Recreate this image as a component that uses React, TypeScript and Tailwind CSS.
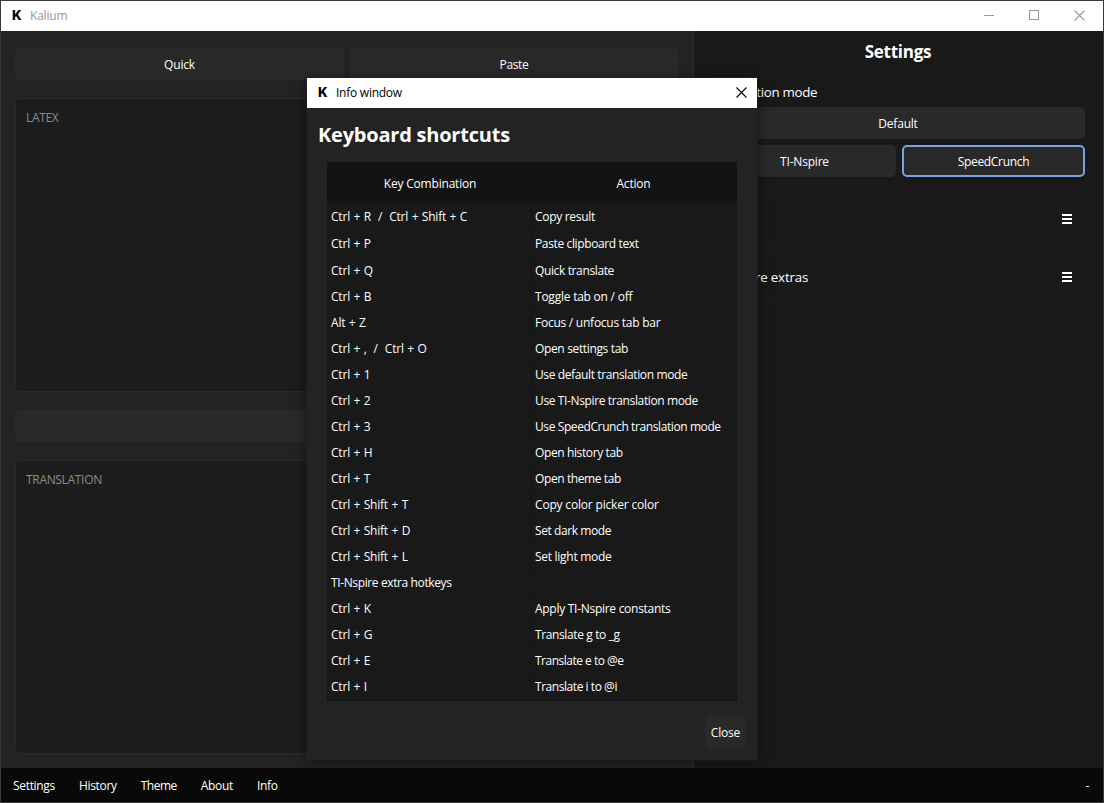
import type { ReactNode } from "react";

const shortcuts: [string, string, string][] = [
  ["Ctrl + R  /  Ctrl + Shift + C", "Copy result", "tracking-[-0.3px]"],
  ["Ctrl + P", "Paste clipboard text", "tracking-[-0.37px]"],
  ["Ctrl + Q", "Quick translate", "tracking-[-0.37px]"],
  ["Ctrl + B", "Toggle tab on / off", "tracking-[-0.23px]"],
  ["Alt + Z", "Focus / unfocus tab bar", "tracking-[-0.25px]"],
  ["Ctrl + ,  /  Ctrl + O", "Open settings tab", "tracking-[-0.35px]"],
  ["Ctrl + 1", "Use default translation mode", "tracking-[-0.38px]"],
  ["Ctrl + 2", "Use TI-Nspire translation mode", "tracking-[-0.37px]"],
  ["Ctrl + 3", "Use SpeedCrunch translation mode", "tracking-[-0.4px]"],
  ["Ctrl + H", "Open history tab", "tracking-[-0.38px]"],
  ["Ctrl + T", "Open theme tab", "tracking-[-0.4px]"],
  ["Ctrl + Shift + T", "Copy color picker color", "tracking-[-0.18px]"],
  ["Ctrl + Shift + D", "Set dark mode", "tracking-[-0.42px]"],
  ["Ctrl + Shift + L", "Set light mode", "tracking-[-0.28px]"],
  ["TI-Nspire extra hotkeys", "", ""],
  ["Ctrl + K", "Apply TI-Nspire constants", "tracking-[-0.28px]"],
  ["Ctrl + G", "Translate g to _g", "tracking-[-0.38px]"],
  ["Ctrl + E", "Translate e to @e", "tracking-[-0.5px]"],
  ["Ctrl + I", "Translate i to @i", "tracking-[-0.45px]"],
];

function Button({ children, className = "" }: { children?: ReactNode; className?: string }) {
  return (
    <button className={`flex h-8 items-center justify-center rounded-[5px] bg-[#292929] pt-px ${className}`}>
      {children}
    </button>
  );
}

function Logo() {
  return <span className="w-[10px] pb-px font-['Inter',sans-serif] text-[13px] leading-none font-extrabold text-black">K</span>;
}

function Cross({ className }: { className: string }) {
  return (
    <svg width="11" height="11" viewBox="0 0 11 11" className={className} fill="none" stroke="currentColor" strokeWidth="1.1">
      <path d="M.5 .5l10 10M10.5 .5l-10 10" />
    </svg>
  );
}

function Hamburger() {
  return (
    <svg width="10" height="10" viewBox="0 0 10 10" fill="#fff" shapeRendering="crispEdges">
      <path d="M0 0h10v2H0zM0 4h10v2H0zM0 8h10v2H0z" />
    </svg>
  );
}

function TextArea({ label }: { label: string }) {
  return (
    <div className="h-[294px] rounded-[5px] border border-[#292929] bg-[#1c1c1c] px-[10px] pt-[10px] leading-[18px] tracking-[-0.32px] text-[#8b8b8b]">
      {label}
    </div>
  );
}

function Translator() {
  return (
    <main className="w-[691px] bg-[#232323] pt-[17px] pr-[14px] pl-[14px]">
      <div className="flex gap-[6px]">
        <Button className="w-[329px]">Quick</Button>
        <Button className="w-[328px] tracking-[-0.35px]">Paste</Button>
      </div>
      <div className="mt-[18px] flex flex-col gap-[18px]">
        <TextArea label="LATEX" />
        <Button />
        <TextArea label="TRANSLATION" />
      </div>
    </main>
  );
}

function Settings() {
  return (
    <aside className="w-[411px] border-l-2 border-[#292929] bg-[#191919] pr-[9px] pl-[10px]">
      <h1 className="h-[42px] pt-[9px] pr-[2px] text-center text-[17px] leading-6 font-bold tracking-[-0.25px]">Settings</h1>
      <section className="h-[113px] rounded-[5px] border border-[#1e1e1e] px-2">
        <h2 className="h-[33px] pt-2 text-[13.3px] leading-5 tracking-[-0.3px]">Translation mode</h2>
        <Button className="w-full pr-[2px]">Default</Button>
        <div className="mt-[6px] flex gap-[6px]">
          <Button className="flex-1">TI-Nspire</Button>
          <Button className="w-[183px] border-2 border-[#7aa2e3] pt-0 tracking-[-0.3px]">SpeedCrunch</Button>
        </div>
      </section>
      <section className="mt-[6px] flex h-[52px] items-center justify-between rounded-[5px] border border-[#1e1e1e] pt-[2px] pr-[21px] pl-2 text-[13.3px]">
        Tabs
        <Hamburger />
      </section>
      <section className="mt-[6px] flex h-[52px] items-center justify-between rounded-[5px] border border-[#1e1e1e] pt-[2px] pr-[21px] pl-2 text-[13.3px] tracking-[-0.17px]">
        TI-Nspire extras
        <Hamburger />
      </section>
    </aside>
  );
}

function InfoWindow() {
  return (
    <div className="absolute top-[77px] left-[306px] flex h-[682px] w-[450px] flex-col bg-[#232323] shadow-[0_2px_14px_rgba(0,0,0,0.45),0_0_0_1px_rgba(40,40,40,0.7)]">
      <div className="flex h-[30px] shrink-0 items-center bg-white pr-[10px] pl-[11px] text-black">
        <Logo />
        <span className="ml-2 tracking-[-0.25px]">Info window</span>
        <Cross className="mb-[2px] ml-auto" />
      </div>
      <h1 className="h-[54px] pt-3 pl-[11px] text-[20px] leading-[30px] font-bold tracking-[-0.22px]">Keyboard shortcuts</h1>
      <div className="mx-5 h-[539px] border-b border-[#131313] bg-[#191919]">
        <div className="flex h-[41px] items-center bg-[#131313] pt-[3px] text-center">
          <span className="w-[206px]">Key Combination</span>
          <span className="w-[201px]">Action</span>
        </div>
        {shortcuts.map(([keys, action, tracking], i) => (
          <div key={keys} className={`flex border-x border-b border-[#151515] whitespace-pre ${i < 3 ? "h-[27px] leading-[27px]" : "h-[26px] leading-[25px]"}`}>
            <span className={`w-[204px] border-r border-[#151515] pl-[3px] ${action ? "[word-spacing:0.6px]" : "tracking-[-0.38px]"}`}>{keys}</span>
            <span className={`pl-[3px] ${tracking}`}>{action}</span>
          </div>
        ))}
      </div>
      <Button className="mt-[15px] mr-[11px] w-[41px] self-end">Close</Button>
    </div>
  );
}

export default function App() {
  return (
    <div className="relative flex h-[803px] w-[1104px] flex-col overflow-hidden border border-[#3b3b3b] bg-[#090909] font-['Open_Sans','Noto_Sans',sans-serif] text-[12px] leading-4 tracking-[-0.2px] text-white">
      <header className="flex h-[30px] shrink-0 items-center bg-white pl-[11px] text-[#999]">
        <Logo />
        <span className="ml-2 tracking-[-0.2px]">Kalium</span>
        <div className="ml-auto flex items-center pr-[18px] pb-[2px]">
          <span className="mr-[35px] h-px w-[10px] bg-[#999]" />
          <span className="mr-[35px] h-[10px] w-[10px] border border-[#999]" />
          <Cross className="text-[#999]" />
        </div>
      </header>
      <div className="flex h-[737px] shrink-0">
        <Translator />
        <Settings />
      </div>
      <footer className="flex flex-1 items-center gap-6 pt-[2px] pr-[14px] pl-3 tracking-[-0.32px]">
        <span>Settings</span>
        <span>History</span>
        <span className="tracking-[-0.5px]">Theme</span>
        <span>About</span>
        <span>Info</span>
        <span className="ml-auto">-</span>
      </footer>
      <InfoWindow />
    </div>
  );
}
